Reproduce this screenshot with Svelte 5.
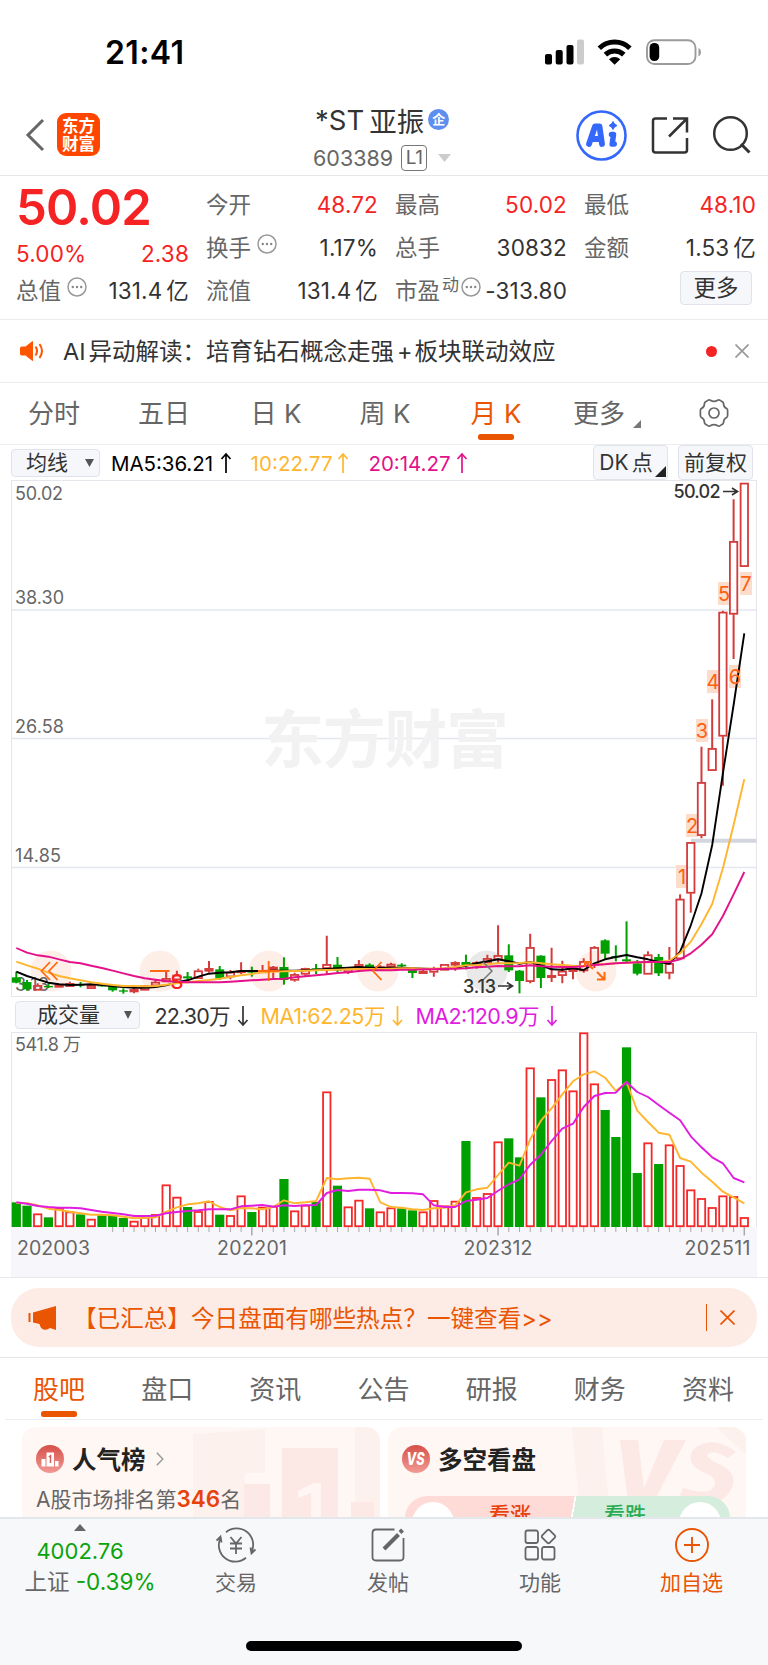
<script lang="ts">
    const periods = [
        { label: "分时", width: 52, left: 28 },
        { label: "五日", width: 52, left: 58 },
        { label: "日 K", width: 44, left: 64 },
        { label: "周 K", width: 46, left: 64 },
        { label: "月 K", width: 44, left: 66 },
    ];
    const sections = ["股吧", "盘口", "资讯", "公告", "研报", "财务", "资料"];
    let period = $state("月 K");
    let section = $state("股吧");

    // u/d, then high, body top, body bottom, low (thirds of a pixel, 0 = y 900)
    const candles: [string, number, number, number, number][] = [
        ["d", 215, 232, 248, 250], ["d", 240, 246, 268, 272], ["u", 250, 256, 271, 271], ["d", 250, 258, 262, 264],
        ["u", 252, 254, 262, 262], ["u", 245, 250, 260, 260], ["d", 246, 252, 256, 262], ["u", 254, 256, 266, 266],
        ["d", 254, 256, 259, 260], ["d", 254, 256, 271, 275], ["d", 265, 271, 275, 281], ["u", 264, 268, 276, 280],
        ["u", 255, 257, 271, 271], ["u", 240, 246, 258, 258], ["u", 216, 235, 246, 246], ["u", 212, 225, 240, 245],
        ["d", 216, 229, 235, 240], ["u", 206, 212, 236, 236], ["u", 183, 205, 214, 218], ["d", 198, 208, 234, 240],
        ["u", 210, 216, 231, 238], ["u", 187, 212, 218, 222], ["d", 200, 213, 218, 230], ["u", 195, 212, 216, 216],
        ["u", 198, 201, 210, 240], ["d", 172, 201, 240, 254], ["u", 218, 223, 241, 245], ["u", 203, 205, 223, 228],
        ["d", 192, 205, 210, 222], ["u", 107, 193, 206, 222], ["d", 171, 194, 212, 216], ["u", 204, 207, 217, 222],
        ["u", 180, 193, 204, 206], ["d", 190, 194, 204, 206], ["u", 196, 200, 205, 210], ["u", 188, 192, 202, 206],
        ["d", 190, 194, 199, 204], ["d", 204, 208, 219, 234], ["u", 210, 213, 221, 221], ["u", 200, 205, 217, 230],
        ["u", 192, 193, 211, 211], ["u", 184, 187, 196, 212], ["d", 164, 186, 195, 208], ["u", 184, 187, 198, 206],
        ["u", 164, 175, 188, 190], ["u", 76, 166, 180, 190], ["d", 133, 166, 211, 216], ["d", 210, 212, 243, 280],
        ["u", 101, 142, 245, 250], ["d", 166, 167, 234, 264], ["u", 143, 226, 233, 246], ["u", 182, 213, 227, 250],
        ["u", 204, 208, 215, 238], ["u", 175, 184, 213, 218], ["u", 138, 142, 196, 204], ["d", 118, 121, 161, 178],
        ["d", 136, 168, 172, 184], ["d", 64, 178, 184, 188], ["d", 180, 190, 221, 226], ["u", 154, 164, 223, 223],
        ["d", 162, 171, 220, 228], ["u", 141, 190, 220, 238], ["u", -17, -3, 177, 177], ["u", -173, -173, -20, 38],
        ["u", -460, -353, -193, -185], ["u", -602, -455, -388, -388], ["u", -868, -864, -491, -343],
        ["u", -1202, -1076, -857, -723], ["u", -1251, -1251, -1000, -1000],
    ];
    const ma5 = [215, 228, 238, 248, 253, 255, 254, 253, 255, 259, 261, 263, 263, 261, 256, 247, 241, 230, 221, 218, 217, 213, 213, 213, 212, 212, 212, 211, 209, 207, 205, 203, 201, 203, 203, 203, 203, 205, 206, 207, 206, 203, 197, 190, 184, 178, 184, 191, 186, 196, 208, 209, 205, 210, 190, 178, 171, 165, 172, 178, 186, 191, 155, 76, -20, -165, -380, -585, -800];
    const ma10 = [185, 196, 206, 218, 228, 235, 241, 247, 251, 255, 258, 258, 259, 258, 254, 250, 247, 243, 240, 236, 231, 226, 222, 217, 215, 214, 213, 212, 211, 210, 209, 208, 207, 207, 207, 206, 205, 205, 206, 206, 205, 201, 196, 195, 193, 190, 190, 189, 187, 190, 193, 195, 197, 198, 195, 192, 190, 188, 187, 187, 185, 182, 160, 125, 72, 12, -95, -225, -362];
    const ma20 = [144, 158, 166, 170, 178, 186, 190, 197, 204, 212, 220, 228, 235, 239, 243, 245, 247, 247, 247, 247, 245, 243, 241, 239, 237, 236, 232, 229, 226, 223, 219, 217, 213, 211, 211, 211, 209, 209, 208, 208, 206, 206, 205, 202, 200, 198, 199, 199, 196, 199, 200, 201, 201, 199, 195, 193, 190, 188, 187, 186, 186, 186, 178, 160, 134, 103, 48, -17, -84];

    // volume tops and averages, 0 = y 1030
    const volumes = [517, 527, 553, 562, 536, 547, 553, 569, 556, 558, 564, 575, 563, 555, 466, 503, 531, 546, 516, 554, 558, 499, 546, 533, 530, 447, 544, 527, 516, 187, 467, 532, 512, 535, 547, 535, 535, 541, 547, 513, 529, 515, 333, 504, 492, 337, 325, 382, 115, 202, 150, 121, 184, 10, 163, 240, 321, 52, 429, 340, 402, 346, 408, 481, 507, 534, 499, 501, 564];
    const vol5 = [519, 520, 526, 536, 540, 545, 550, 554, 554, 556, 560, 565, 563, 562, 545, 532, 523, 520, 514, 531, 541, 534, 535, 538, 531, 511, 520, 517, 513, 444, 448, 445, 443, 446, 517, 531, 533, 538, 540, 535, 533, 526, 487, 478, 473, 435, 398, 407, 328, 272, 235, 193, 154, 133, 124, 143, 183, 156, 242, 276, 308, 314, 384, 395, 428, 455, 485, 502, 520];
    const vol10 = [517, 521, 528, 531, 533, 533, 535, 540, 545, 549, 553, 558, 558, 557, 550, 546, 543, 541, 538, 538, 538, 529, 527, 525, 530, 526, 528, 526, 525, 489, 480, 483, 479, 479, 481, 489, 489, 490, 493, 526, 531, 531, 513, 509, 504, 482, 463, 448, 404, 374, 333, 296, 281, 231, 198, 189, 188, 156, 186, 201, 225, 248, 271, 319, 352, 382, 400, 444, 457];

    const counts = [
        { n: 1, x: 676, y: 865 },
        { n: 2, x: 686, y: 814 },
        { n: 3, x: 696, y: 719 },
        { n: 4, x: 707, y: 670 },
        { n: 5, x: 718, y: 582 },
        { n: 6, x: 729, y: 665 },
        { n: 7, x: 740, y: 572 },
    ];

    const cx = (i: number) => 16.3 + i * 10.706;
    const py = (v: number) => 900 + v / 3;
    const vy = (v: number) => 1030 + v / 3;
    const line = (data: number[], y: (v: number) => number) =>
        data.map((v, i) => `${cx(i).toFixed(1)},${y(v).toFixed(1)}`).join(" ");
</script>

{#snippet dots()}
    <svg class="dots" width="20" height="20" viewBox="0 0 20 20">
        <circle cx="10" cy="10" r="9" fill="none" stroke="#999" stroke-width="1.500" />
        <circle cx="5.800" cy="10" r="1.200" fill="#888" />
        <circle cx="10" cy="10" r="1.200" fill="#888" />
        <circle cx="14.200" cy="10" r="1.200" fill="#888" />
    </svg>
{/snippet}

<main>
    <div class="status">
        <span class="clock">21:41</span>
        <svg width="160" height="30" viewBox="543 37 160 30">
            <rect x="545" y="54" width="7" height="10.500" rx="2" />
            <rect x="555.700" y="50" width="7" height="14.500" rx="2" />
            <rect x="566.500" y="45" width="7" height="19.500" rx="2" />
            <rect x="577" y="39.500" width="7" height="25" rx="2" fill="#ccc" />
            <g fill="none" stroke="#000" stroke-width="5">
                <path d="M599.3 48.2a22 22 0 0 1 30.6 0" />
                <path d="M605.4 54.6a13.400 13.400 0 0 1 18.400 0" />
            </g>
            <path d="M609 59.2a8.400 8.400 0 0 1 11.200 0l-5.600 5.600z" />
            <rect x="647" y="40.200" width="48.500" height="23.800" rx="7.500" fill="none" stroke="#9b9b9b" stroke-width="1.900" />
            <rect x="649.600" y="43" width="9.600" height="18" rx="4.600" />
            <path d="M698.5 48v8.400q2.500-1 2.500-4.200t-2.500-4.200z" fill="#999" />
        </svg>
    </div>

    <header>
        <svg class="back" width="20" height="34" viewBox="0 0 20 34" fill="none" stroke="#666" stroke-width="3">
            <path d="M18 2 3 17l15 15" />
        </svg>
        <div class="logo"><span>东方</span><span>财富</span></div>
        <div class="title">
            <div class="name">*ST<i></i>亚振<b>企</b></div>
            <div class="code">603389<em>L1</em><svg width="13" height="8"><path d="M0 0h13L6.500 8z" fill="#ccc" /></svg></div>
        </div>
        <svg class="tools" width="180" height="54" viewBox="574 108 180 54" fill="none">
            <circle cx="601.500" cy="135.500" r="24" stroke="#3467fb" stroke-width="2.600" />
            <path d="M589 144 595 126.500h4.500l2.500 17.500M592 139h8" stroke="#3467fb" stroke-width="5.800" stroke-linejoin="round" stroke-linecap="round" />
            <path d="M611.500 134.500h2l-1.300 9.500h2" stroke="#3467fb" stroke-width="5.500" stroke-linejoin="round" stroke-linecap="round" />
            <path d="M613 121.500q1 3 4 4-3 1-4 4-1-3-4-4 3-1 4-4z" fill="#3467fb" stroke="#3467fb" />
            <g stroke="#333" stroke-width="2.500">
                <path d="M667 118.500h-11.500q-2.500 0-2.500 2.500v29q0 2.500 2.500 2.500h29q2.500 0 2.500-2.500v-12M673 118.500h14v14M686.500 119 669 136.500" />
                <circle cx="730.500" cy="133.500" r="16.300" />
                <path d="m741 144 8.500 8.500" stroke-width="3" />
            </g>
        </svg>
    </header>

    <div class="quote">
        <div class="col">
            <div class="price">50.02</div>
            <div class="row change red"><span>5.00%</span><span>2.38</span></div>
            <div class="row"><label>总值{@render dots()}</label><span>131.4<u></u>亿</span></div>
        </div>
        <div class="col">
            <div class="row"><label>今开</label><span class="red">48.72</span></div>
            <div class="row"><label>换手{@render dots()}</label><span>1.17%</span></div>
            <div class="row"><label>流值</label><span>131.4<u></u>亿</span></div>
        </div>
        <div class="col">
            <div class="row"><label>最高</label><span class="red">50.02</span></div>
            <div class="row"><label>总手</label><span>30832</span></div>
            <div class="row"><label class="pe">市盈<small>动</small>{@render dots()}</label><span>-313.80</span></div>
        </div>
        <div class="col">
            <div class="row"><label>最低</label><span class="red">48.10</span></div>
            <div class="row"><label>金额</label><span>1.53<u></u>亿</span></div>
            <div class="row end"><button class="more">更多</button></div>
        </div>
    </div>

    <div class="news">
        <svg width="24" height="22" viewBox="0 0 24 22" fill="none" stroke="#ff5500" stroke-width="2">
            <path d="M1.500 7h4l7-5.500v19L5.500 15h-4q-1 0-1-1V8q0-1 1-1z" fill="#ff5500" stroke-linejoin="round" stroke-width="1" />
            <path d="M15.500 6.500q3 4.500 0 9M19.500 4q5 7 0 14" />
        </svg>
        <p>AI<u></u>异动解读：培育钻石概念走强<span>+</span>板块联动效应</p>
        <i class="dot"></i>
        <svg class="close" width="14" height="14" viewBox="0 0 14 14" stroke="#999" stroke-width="1.700"><path d="m.5.5 13 13m0-13-13 13" /></svg>
    </div>

    <nav class="periods">
        {#each periods as p}
            <button class:active={p.label === period} style="width: {p.width}px; margin-left: {p.left}px" onclick={() => (period = p.label)}>{p.label}</button>
        {/each}
        <button class="rest">更多<svg width="8" height="8"><path d="M8 0v8H0z" fill="#777" /></svg></button>
        <svg class="gear" width="30" height="30" viewBox="-15 -15 30 30" fill="none" stroke="#666" stroke-width="1.700">
            <path stroke-linejoin="round" d="M-6.200-12.600q1.200-.8 2.600-.2 3.600 2.200 7.200 0 1.400-.6 2.600.2l2.500 1.600q.8.600.9 1.900 0 3.200 3 4.700 1 .6 1 2v4.800q0 1.400-1 2-3 1.500-3 4.700-.1 1.300-.9 1.900l-2.500 1.600q-1.200.8-2.600.2-3.600-2.200-7.200 0-1.400.6-2.600-.2L-8.700 11q-.8-.6-.9-1.900 0-3.200-3-4.700-1-.6-1-2v-4.800q0-1.400 1-2 3-1.500 3-4.700.1-1.300.9-1.900z" />
            <circle r="5" />
        </svg>
    </nav>

    <div class="legend">
        <button class="pick">均线<svg width="9" height="8"><path d="M0 0h9L4.500 8z" fill="#555" /></svg></button>
        <svg class="values" width="370" height="35" viewBox="105 445 370 35">
            <text x="111" y="470.500" textLength="102" fill="#000">MA5:36.21</text>
            <text x="250.500" y="470.500" textLength="82" fill="#ffb62e">10:22.77</text>
            <text x="368.500" y="470.500" textLength="82" fill="#e4118b">20:14.27</text>
            <g fill="none" stroke-width="1.700">
                <path stroke="#000" d="M226 473v-19m-4.500 5 4.500-5 4.500 5" />
                <path stroke="#ffb62e" d="M343 473v-19m-4.500 5 4.500-5 4.500 5" />
                <path stroke="#e4118b" d="M462 473v-19m-4.500 5 4.500-5 4.500 5" />
            </g>
        </svg>
        <button class="dk">DK<u></u>点<svg width="11" height="11"><path d="M11 0v11H0z" fill="#222" /></svg></button>
        <button class="adj">前复权</button>
    </div>

    <svg class="chart" width="768" height="517" viewBox="0 480 768 517">
        <rect x="11.500" y="480.500" width="745" height="516" fill="#fff" stroke="#e4e6ec" />
        <path d="M12 610h744M12 738.500h744M12 867.500h744" stroke="#e4e7f0" stroke-width="1.500" />
        <text class="mark" x="261" y="762" textLength="248">东方财富</text>
        <path d="M691 840.700h65.500" stroke="#d4d6dd" stroke-width="4" />
        <g fill="#fdeee7">
            <circle cx="51" cy="971" r="20.500" />
            <circle cx="160" cy="971" r="20.500" />
            <circle cx="269" cy="971" r="20.500" />
            <circle cx="378" cy="971" r="20.500" />
            <circle cx="487" cy="971" r="20.500" fill="#e9e9ea" />
            <circle cx="596" cy="971" r="20.500" />
        </g>
        <g class="axis">
            <text x="15" y="500" textLength="48">50.02</text>
            <text x="15" y="604" textLength="49">38.30</text>
            <text x="15" y="733" textLength="49">26.58</text>
            <text x="15" y="862" textLength="46">14.85</text>
            <text x="15" y="991" textLength="34">3.13</text>
        </g>
        {#each counts as c}
            <rect x={c.x} y={c.y} width="12" height="23" fill="#fcdccb" />
        {/each}
        {#each candles as [dir, high, top, bottom, low], i}
            {#if dir === "u"}
                <path d="M{cx(i)} {py(high)}V{py(top)}M{cx(i)} {py(bottom)}V{py(low)}" stroke="#d43b3b" stroke-width="2" />
                <rect x={cx(i) - 3.7} y={py(top) + 0.6} width="7.400" height={Math.max((bottom - top) / 3 - 1.2, 1)} fill="none" stroke="#d43b3b" stroke-width="1.800" />
            {:else}
                <path d="M{cx(i)} {py(high)}V{py(low)}" stroke="#00a000" stroke-width="2" />
                <rect x={cx(i) - 4.5} y={py(top)} width="9" height={(bottom - top) / 3} fill="#00a000" />
            {/if}
        {/each}
        <g fill="none" stroke-width="1.900" stroke-linejoin="round">
            <polyline points={line(ma5, py)} stroke="#000" />
            <polyline points={line(ma10, py)} stroke="#ffb62e" />
            <polyline points={line(ma20, py)} stroke="#e4118b" />
        </g>
        <g fill="none" stroke="#ff6a10" stroke-width="1.800">
            <path d="m50 962-8.500 9 8.500 9m7.500-18-8.500 9 8.500 9M150 971h19.500M258 971h21M268.700 961v20M381.500 962l-8.500 9 8.500 9" />
            <path d="m597 972 7.500 7.500m0-7.500v7.500h-7.500M585 967v-5h7m-6 0 7 7" stroke-width="2" />
        </g>
        <path d="m483 962 9 9-9 9" fill="none" stroke="#777" stroke-width="1.500" />
        <text class="sell" x="170.500" y="989">S</text>
        {#each counts as c}
            <text class="count" x={c.x + 6} y={c.y + 18.5}>{c.n}</text>
        {/each}
        <g class="peak">
            <text x="673.500" y="497.700" textLength="47">50.02</text>
            <text x="463" y="992.500" textLength="33">3.13</text>
            <path d="M723 491.500h14m-5-3.500 5.500 3.500-5.500 3.500M498 986h14m-5-3.500 5.500 3.500-5.500 3.500" fill="none" stroke="#333" stroke-width="1.700" />
        </g>
    </svg>

    <div class="legend vol">
        <button class="pick">成交量<svg width="8" height="8"><path d="M0 0h8L4 8z" fill="#555" /></svg></button>
        <svg class="values" width="420" height="34" viewBox="145 998 420 34">
            <text x="154.500" y="1023.500" textLength="76" fill="#333">22.30万</text>
            <text x="260.500" y="1023.500" textLength="125" fill="#ffb62e">MA1:62.25万</text>
            <text x="415.500" y="1023.500" textLength="124" fill="#e11ce1">MA2:120.9万</text>
            <g fill="none" stroke-width="1.700">
                <path stroke="#333" d="M243 1006v19m-4.500-5 4.500 5 4.500-5" />
                <path stroke="#ffb62e" d="M397.500 1006v19m-4.500-5 4.500 5 4.500-5" />
                <path stroke="#e11ce1" d="M552 1006v19m-4.500-5 4.500 5 4.500-5" />
            </g>
        </svg>
    </div>

    <svg class="chart" width="768" height="245" viewBox="0 1032 768 245">
        <rect x="11" y="1227" width="746" height="50" fill="#f7f7fb" />
        <path d="M11.500 1227v-194.500h745V1227" fill="none" stroke="#e4e6ec" />
        {#each volumes as v, i}
            {#if candles[i][0] === "u"}
                <rect x={cx(i) - 3.7} y={vy(v)} width="7.400" height={1226.2 - vy(v)} fill="#fff" stroke="#f62828" stroke-width="1.800" />
            {:else}
                <rect x={cx(i) - 4.6} y={vy(v)} width="9.200" height={1227 - vy(v)} fill="#00a000" />
            {/if}
            {#if i > 8}
                <path d="M{cx(i)} 1227v{i === 22 || i === 45 || i === 68 ? 8.5 : 5}" stroke="#a9a9ac" stroke-width={i === 22 || i === 45 || i === 68 ? 1.5 : 1} />
            {/if}
        {/each}
        <g fill="none" stroke-width="1.900" stroke-linejoin="round">
            <polyline points={line(vol5, vy)} stroke="#ffb62e" />
            <polyline points={line(vol10, vy)} stroke="#e11ce1" />
        </g>
        <g class="axis">
            <text x="15" y="1050.500" textLength="66">541.8 万</text>
            <g class="dates">
                <text x="17" y="1255" textLength="73">202003</text>
                <text x="217" y="1255" textLength="70">202201</text>
                <text x="463.500" y="1255" textLength="69">202312</text>
                <text x="684.500" y="1255" textLength="66">202511</text>
            </g>
        </g>
    </svg>

    <div class="promo">
        <div class="banner">
            <svg width="29" height="26" viewBox="0 0 29 26" fill="#ea5504">
                <rect x=".500" y="8" width="2" height="9" />
                <path d="M5 7.500 28 1v24l-6-2q-3 2.500-6.500 1.500-3-1-4-5.500L5 17.500z" />
            </svg>
            <p>【已汇总】今日盘面有哪些热点？一键查看&gt;&gt;</p>
            <i></i>
            <svg width="15" height="15" viewBox="0 0 15 15" stroke="#ea5504" stroke-width="1.700"><path d="m.5.5 14 14m0-14-14 14" /></svg>
        </div>
    </div>

    <nav class="sections">
        {#each sections as s}
            <button class:active={s === section} onclick={() => (section = s)}>{s}</button>
        {/each}
    </nav>

    <div class="cards">
        <div class="card">
            <svg class="ghost" width="358" height="90" viewBox="22 1427 358 90">
                <path d="M193 1434 265 1429v44h-20v44h-52zM355 1427h25v90h-25z" fill="#fdf1ee" />
                <path d="M244 1484h26v33h-26zM282 1448h56v69h-56zM351 1502h23v15h-23z" fill="#fce9e6" />
                <path d="M298 1491l16-8h7v34h-10v-24l-13 5z" fill="#fff6f3" />
            </svg>
            <h3>
                <svg width="28" height="28" viewBox="0 0 28 28">
                    <defs><linearGradient id="badge" x2="0" y2="1"><stop stop-color="#d65049" /><stop offset="1" stop-color="#f29a94" /></linearGradient></defs>
                    <circle cx="14" cy="14" r="14" fill="url(#badge)" />
                    <path d="M5.500 14h4v7.500h-4zM10.500 7.500h7.500v14h-7.500zM19 16h3.500v5.500H19z" fill="#fff" />
                    <path d="m12.800 12 1.700-1.200V18" fill="none" stroke="#d9605a" stroke-width="1.500" />
                </svg>
                人气榜
                <svg class="arrow" width="8" height="14" viewBox="0 0 8 14" fill="none" stroke="#999" stroke-width="1.500"><path d="m.8.8 6 6.200-6 6.200" /></svg>
            </h3>
            <p>A股市场排名第<b>346</b>名</p>
        </div>
        <div class="card">
            <svg class="ghost" width="358" height="90" viewBox="388 1427 358 90">
                <path d="M572 1427h30l8 90h-30zM716 1427h20l10 8v20z" fill="#fdf1ee" />
                <path d="M620 1440h18l6 48 20-48h22l-40 77h-16zM736 1452q-18-14-34-8-14 6-11 17 3 8 16 13 11 5 7 13-6 9-31 1l-5 13q36 11 51-8 12-18-8-28-16-7-13-11 5-5 20 4z" fill="#fce9e6" />
            </svg>
            <h3>
                <svg width="28" height="28" viewBox="0 0 28 28">
                    <circle cx="14" cy="14" r="14" fill="url(#badge)" />
                    <text class="vs" x="4.500" y="20" textLength="18" lengthAdjust="spacingAndGlyphs">VS</text>
                </svg>
                多空看盘
            </h3>
            <div class="votes">
                <span class="up"><i></i>看涨</span>
                <span class="down">看跌<i></i></span>
            </div>
        </div>
    </div>

    <footer>
        <div class="bar">
            <div class="index">
                <svg width="12" height="7"><path d="M6 0l6 7H0z" fill="#666" /></svg>
                <span class="point green">4002.76</span>
                <span>上证 <em class="green">-0.39%</em></span>
            </div>
            <div class="item">
                <svg width="40" height="38" viewBox="-20 -19 40 38" fill="none" stroke="#666" stroke-width="1.800">
                    <path d="M-10-12.800A16.500 16.500 0 0 1 15.500 7M-15.500-7A16.500 16.500 0 0 0 10 12.800M-19.500-4.500l4-4 1 6M19.500 4.500l-4 4-1-6M-5.500-8 0-1.500 5.500-8M0-1.500V9M-6-1.500H6M-6 3.500H6" />
                </svg>
                <span>交易</span>
            </div>
            <div class="item">
                <svg width="40" height="38" viewBox="-20 -19 40 38" fill="none" stroke="#666" stroke-width="1.800">
                    <path d="M6.500-15.500H-12q-3.500 0-3.500 3.500v24q0 3.500 3.500 3.500h24q3.500 0 3.500-3.500V-7" />
                    <path d="M-4 4 10.500-10.500" stroke-width="4" />
                    <path d="m12-12.500 2.500-2.500" stroke-width="4" />
                </svg>
                <span>发帖</span>
            </div>
            <div class="item">
                <svg width="40" height="38" viewBox="-20 -19 40 38" fill="none" stroke="#666" stroke-width="1.800">
                    <rect x="-14.500" y="-14.500" width="12.500" height="12.500" rx="2" />
                    <rect x="-14.500" y="2" width="12.500" height="12.500" rx="2" />
                    <rect x="2" y="2" width="12.500" height="12.500" rx="2" />
                    <rect x="3.300" y="-13.700" width="10.400" height="10.400" rx="1.500" transform="rotate(45 8.500 -8.500)" />
                </svg>
                <span>功能</span>
            </div>
            <div class="item add">
                <svg width="40" height="38" viewBox="-20 -19 40 38" fill="none" stroke="#ea5504" stroke-width="1.900">
                    <circle r="16" /><path d="M-8 0H8M0-8V8" />
                </svg>
                <span>加自选</span>
            </div>
        </div>
        <div class="home"></div>
    </footer>
</main>

<style>
    :global(body) {
        background: #fff;
    }

    main {
        width: 768px;
        height: 1665px;
        display: flex;
        flex-direction: column;
        overflow: hidden;
        font-family: Inter, "Noto Sans CJK SC", sans-serif;
        font-size: 22px;
        color: #333;
        white-space: nowrap;
    }

    main > * {
        flex: none;
        box-sizing: border-box;
    }

    svg {
        display: block;
        flex: none;
    }

    button {
        font: inherit;
        color: inherit;
        background: none;
        border: 0;
        padding: 0;
        display: flex;
        align-items: center;
        justify-content: center;
        box-sizing: border-box;
    }

    p,
    h3 {
        margin: 0;
    }

    i,
    em {
        font-style: normal;
    }

    u {
        display: inline-block;
        width: 4px;
    }

    .red {
        color: #f52323;
    }

    .green {
        color: #0aa30a;
    }

    .status {
        height: 95px;
        display: flex;
        justify-content: space-between;
        align-items: flex-start;
        padding: 37px 65px 0 105px;
    }

    .clock {
        font-size: 32px;
        font-weight: 600;
        line-height: 31px;
        letter-spacing: 0.4px;
        color: #000;
    }

    header {
        height: 81px;
        display: flex;
        align-items: flex-start;
        border-bottom: 1.5px solid #e6e7ea;
        padding: 12px 14px 0 25px;
    }

    .back {
        margin-top: 11px;
    }

    .logo {
        margin: 6px 0 0 12px;
        width: 43px;
        height: 43px;
        border-radius: 9px;
        background: #ff4600;
        color: #fff;
        font-size: 16.5px;
        font-weight: 700;
        line-height: 18px;
        display: flex;
        flex-direction: column;
        align-items: center;
        justify-content: center;
    }

    .title {
        margin-left: 213px;
        width: 261px;
    }

    .name {
        display: flex;
        align-items: center;
        height: 25px;
        margin-left: 2px;
        font-size: 27.5px;
    }

    .name i {
        width: 5px;
    }

    .name b {
        width: 21px;
        height: 21px;
        margin-left: 4px;
        border-radius: 50%;
        background: #5e8ff0;
        color: #fff;
        font-size: 13px;
        line-height: 20px;
        text-align: center;
    }

    .code {
        display: flex;
        align-items: center;
        height: 30px;
        margin-top: 11px;
        font-size: 21.5px;
        color: #666;
    }

    .code em {
        margin: 0 11px 0 8px;
        width: 24px;
        height: 24px;
        border: 1.3px solid #777;
        border-radius: 4px;
        font-size: 19px;
        line-height: 24px;
        text-align: center;
        letter-spacing: -0.5px;
    }

    .tools {
        margin-top: 1px;
    }

    .quote {
        height: 144px;
        display: grid;
        grid-template-columns: 173px 172px 172px 172px;
        column-gap: 17px;
        padding: 7px 0 0 16px;
        border-bottom: 1px solid #ededf0;
    }

    .row {
        height: 43px;
        display: flex;
        align-items: center;
        justify-content: space-between;
        line-height: 43px;
    }

    .row > span {
        font-size: 22.500px;
        letter-spacing: 0.15px;
    }

    .row label {
        display: flex;
        color: #666;
        font-size: 22.500px;
    }

    .dots {
        margin: 8px 0 0 6px;
    }

    .pe {
        width: 140px;
    }

    .pe small {
        font-size: 17px;
        line-height: 32px;
        margin-left: 2px;
    }

    .pe .dots,
    .pe :global(.dots) {
        margin-left: 2px;
    }

    .pe + span {
        margin-left: -60px;
    }

    .price {
        height: 55px;
        font-size: 49px;
        font-weight: 600;
        line-height: 50px;
        color: #f52323;
        letter-spacing: -0.8px;
    }

    .change {
        height: 31px;
        line-height: 48px;
    }

    .change + .row,
    .row:nth-child(3) {
        margin-top: -0.5px;
    }

    .end {
        justify-content: flex-end;
    }

    .more {
        width: 72px;
        height: 34px;
        margin: -5px 4px 0 0;
        line-height: 34px;
        border: 1.5px solid #e0e3ea;
        border-radius: 4px;
        background: #f6f7fa;
        font-size: 22.500px;
    }

    .news {
        height: 63px;
        display: flex;
        align-items: center;
        padding: 0 19px 0 20px;
        border-bottom: 1px solid #ededf0;
        font-size: 23.500px;
    }

    .news p {
        margin: -2px 0 0 19px;
        flex: 1;
    }

    .news u {
        width: 3px;
    }

    .news span {
        margin: 0 2px 0 3px;
    }

    .dot {
        width: 11px;
        height: 11px;
        margin-right: 18px;
        border-radius: 50%;
        background: #f52323;
    }

    .periods {
        height: 62px;
        display: flex;
        align-items: center;
        border-bottom: 1px solid #ededf0;
        font-size: 26px;
        word-spacing: -3px;
        color: #666;
    }

    .periods button {
        height: 61px;
        position: relative;
        padding-bottom: 4px;
    }

    .active {
        color: #ea5504;
    }

    .active::after {
        content: "";
        position: absolute;
        left: calc(50% - 18px);
        bottom: 4px;
        width: 36px;
        height: 6px;
        border-radius: 2.5px;
        background: #ea5504;
    }

    .periods .rest {
        margin-left: 55px;
    }

    .rest svg {
        margin: 24px 0 0 8px;
    }

    .gear {
        margin-left: 58px;
        margin-bottom: 2px;
    }

    .legend {
        height: 35px;
        display: flex;
        align-items: center;
        padding-left: 11px;
        font-size: 21px;
    }

    .legend button {
        border: 1.5px solid #e0e3ea;
        border-radius: 4px;
        background: #f6f7fa;
        height: 35px;
        line-height: 30px;
    }

    .legend .pick {
        width: 89px;
        height: 28px;
        padding-left: 9px;
        margin-right: 5px;
    }

    .pick svg {
        margin-left: 17px;
    }

    .values {
        font-size: 20.500px;
    }

    .legend .dk {
        width: 75px;
        margin-left: 118px;
    }

    .dk u {
        width: 3px;
    }

    .dk svg {
        margin: 18px -4px 0 2px;
    }

    .legend .adj {
        width: 75px;
        margin-left: 10px;
    }

    .vol {
        padding-left: 15px;
    }

    .vol .pick {
        width: 125px;
        padding-left: 14px;
        margin-right: 5px;
    }

    .vol .pick svg {
        margin-left: 24px;
    }

    .vol .values {
        font-size: 21.500px;
    }

    .axis {
        font-size: 18px;
        fill: #666;
    }

    .dates {
        font-size: 19.500px;
    }

    .mark {
        font-size: 63px;
        font-weight: 700;
        fill: #f2f2f3;
    }

    .count {
        font-size: 20px;
        fill: #ff6010;
        text-anchor: middle;
    }

    .sell {
        font-size: 20px;
        font-weight: 500;
        fill: #fb2020;
    }

    .peak {
        font-size: 18px;
        font-weight: 500;
        fill: #333;
    }

    .promo {
        height: 81px;
        padding: 10px 11px 0;
        border-top: 1.5px solid #e6e8ee;
        border-bottom: 1.5px solid #e6e7ea;
    }

    .banner {
        height: 59px;
        display: flex;
        align-items: center;
        padding: 0 22px 0 17px;
        border-radius: 28px;
        background: #fdece5;
        color: #ea5504;
        font-size: 23.600px;
    }

    .banner p {
        flex: 1;
        margin: -2px 0 0 16px;
    }

    .banner i {
        width: 1.5px;
        height: 27px;
        margin-right: 13px;
        background: #ea5504;
    }

    .sections {
        height: 62px;
        margin: 0 5px;
        padding: 0 29px 0 28px;
        display: flex;
        justify-content: space-between;
        border-bottom: 1.5px solid #ecedf3;
        font-size: 26px;
        color: #666;
    }

    .sections button {
        position: relative;
        height: 61px;
        padding-bottom: 2px;
    }

    .sections .active::after {
        bottom: 2px;
    }

    .cards {
        height: 97px;
        display: flex;
        gap: 8px;
        padding: 7px 22px 0;
        overflow: hidden;
    }

    .card {
        position: relative;
        width: 358px;
        height: 140px;
        box-sizing: border-box;
        padding: 17px 14px;
        border-radius: 14px;
        overflow: hidden;
        background: #fff7f4;
    }

    .ghost {
        position: absolute;
        left: 0;
        top: 0;
    }

    h3 {
        position: relative;
        display: flex;
        align-items: center;
        gap: 8px;
        height: 29px;
        font-size: 24.500px;
        font-weight: 600;
        color: #222;
    }

    .arrow {
        margin-left: 2px;
    }

    .card p {
        position: relative;
        margin: 11px 0 0;
        font-size: 21px;
        line-height: 30px;
        color: #666;
    }

    .card p b {
        color: #e8420c;
        font-weight: 600;
        font-size: 22.500px;
    }

    .vs {
        font-size: 17px;
        font-weight: 800;
        font-style: italic;
        fill: #fff;
    }

    .votes {
        position: relative;
        display: flex;
        width: 325px;
        height: 44px;
        margin: 23px 0 0 3px;
        border-radius: 22px;
        overflow: hidden;
        font-size: 21px;
        font-weight: 500;
        line-height: 38px;
        background: linear-gradient(100deg, #ffdbd8 51%, #fff 51%, #fff 51.5%, #d5eddd 51.5%);
    }

    .votes span {
        display: flex;
        box-sizing: border-box;
    }

    .votes i {
        width: 42px;
        height: 42px;
        border-radius: 50%;
        background: #fff;
        margin-top: 6px;
    }

    .up {
        width: 165px;
        padding-left: 7px;
        gap: 35px;
        color: #e8420c;
    }

    .down {
        padding-left: 34px;
        gap: 33px;
        color: #2cab56;
    }

    footer {
        height: 148px;
        border-top: 2px solid #e3e6ea;
        background: #f7f8fa;
    }

    .bar {
        display: grid;
        grid-template-columns: 160px 152px 152px 152px 151px;
        height: 122px;
        font-size: 21px;
        color: #666;
    }

    .index {
        display: flex;
        flex-direction: column;
        align-items: center;
        padding-top: 5px;
        line-height: 32px;
        font-size: 22.500px;
    }

    .index span:last-child {
        margin-left: 20px;
        margin-top: -1px;
    }

    .index .point {
        margin-top: 4px;
        font-size: 22px;
    }

    .item {
        display: flex;
        flex-direction: column;
        align-items: center;
        padding-top: 7px;
    }

    .item span {
        margin-top: 3px;
        line-height: 32px;
    }

    .add {
        color: #ea5504;
    }

    .home {
        width: 276px;
        height: 10px;
        margin: 0 auto;
        border-radius: 5px;
        background: #000;
    }
</style>
